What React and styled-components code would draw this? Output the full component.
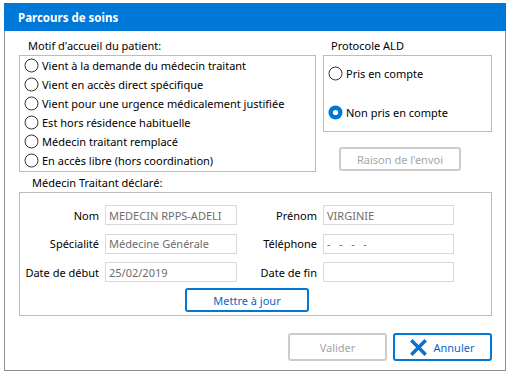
import React from "react";
import styled, { createGlobalStyle } from "styled-components";

const Global = createGlobalStyle`
  html, body { margin: 0; padding: 0; background: #ffffff; }
  body { font-family: "Noto Sans", "DejaVu Sans", sans-serif; font-size: 11px; color: #000; }
  * { box-sizing: border-box; }
`;

const Window = styled.div`
  margin: 3px 0 0 4px;
  width: 502px;
  height: 368px;
  border: 1px solid #8e8e8e;
  border-top: none;
  background: #fff;
  display: flex;
  flex-direction: column;
`;

const TitleBar = styled.div`
  height: 28px;
  margin: 0 -1px;
  background: #0078d7;
  color: #fff;
  font-weight: bold;
  font-size: 11.5px;
  display: flex;
  align-items: center;
  padding-left: 14px;
`;

const Content = styled.div`
  padding: 8px 13px 0 14px;
  display: flex;
  flex-direction: column;
`;

const TopRow = styled.div`
  display: flex;
  gap: 7px;
`;

const Group = styled.div`
  display: flex;
  flex-direction: column;
  width: ${(p) => p.$w}px;
`;

const GroupLabel = styled.div`
  height: 16px;
  line-height: 14px;
  padding-left: ${(p) => p.$indent}px;
`;

const Box = styled.div`
  border: 1px solid #bcbcbc;
  height: ${(p) => p.$h}px;
  display: flex;
  flex-direction: column;
  padding: ${(p) => p.$pad || "0"};
  gap: ${(p) => p.$gap || 0}px;
`;

const RadioRow = styled.label`
  display: flex;
  align-items: center;
  flex: none;
  height: ${(p) => p.$h || 19}px;
  gap: 3px;
  padding-left: 4px;
  white-space: nowrap;
`;

const Radio = ({ checked }) => (
  <svg width="15" height="15" viewBox="0 0 15 15">
    {checked ? (
      <>
        <circle cx="7.5" cy="7.5" r="7" fill="#0078d7" />
        <circle cx="7.5" cy="7.5" r="2.6" fill="#fff" />
      </>
    ) : (
      <circle cx="7.5" cy="7.5" r="6.5" fill="#fff" stroke="#333" strokeWidth="1" />
    )}
  </svg>
);

const Button = styled.div`
  width: ${(p) => p.$w}px;
  height: ${(p) => p.$h}px;
  margin: ${(p) => p.$m || "0"};
  border: ${(p) => (p.$primary ? "2px solid #0078d7" : "2px solid #cccccc")};
  border-radius: 3px;
  color: ${(p) => (p.$primary ? "#0a64c8" : "#a6a6a6")};
  display: flex;
  align-items: center;
  justify-content: center;
  gap: 6px;
  background: #fff;
  flex: none;
`;

const FieldGrid = styled.div`
  display: grid;
  grid-template-columns: 74px 132px 74px 131px;
  grid-auto-rows: 20px;
  column-gap: 6px;
  row-gap: 8.5px;
  padding-left: 5px;
`;

const FieldLabel = styled.div`
  text-align: right;
  align-self: center;
  white-space: nowrap;
`;

const Input = styled.div`
  border: 1px solid #d9d9d9;
  color: #6d6d6d;
  padding-left: 3px;
  display: flex;
  align-items: center;
  white-space: pre;
  overflow: hidden;
`;

const Footer = styled.div`
  display: flex;
  justify-content: flex-end;
  gap: 6px;
  margin-top: 17px;
`;

const motifs = [
  "Vient à la demande du médecin traitant",
  "Vient en accès direct spécifique",
  "Vient pour une urgence médicalement justifiée",
  "Est hors résidence habituelle",
  "Médecin traitant remplacé",
  "En accès libre (hors coordination)",
];

const fields = [
  ["Nom", "MEDECIN RPPS-ADELI", "Prénom", "VIRGINIE"],
  ["Spécialité", "Médecine Générale", "Téléphone", "-   -   -   -"],
  ["Date de début", "25/02/2019", "Date de fin", ""],
];

const XIcon = () => (
  <svg width="17" height="17" viewBox="0 0 17 17">
    <path d="M2.5 2.5 L14.5 14.5 M14.5 2.5 L2.5 14.5" stroke="#0a6fd0" strokeWidth="3.4" strokeLinecap="square" />
  </svg>
);

export default function App() {
  return (
    <>
      <Global />
      <Window>
        <TitleBar>Parcours de soins</TitleBar>
        <Content>
          <TopRow>
            <Group $w={297}>
              <GroupLabel $indent={9}>Motif d'accueil du patient:</GroupLabel>
              <Box $h={117}>
                {motifs.map((m) => (
                  <RadioRow key={m}>
                    <Radio />
                    {m}
                  </RadioRow>
                ))}
              </Box>
            </Group>
            <Group $w={169}>
              <GroupLabel $indent={8}>Protocole ALD</GroupLabel>
              <Box $h={77} $pad="7px 0 0 0" $gap={19}>
                <RadioRow $h={20}>
                  <Radio />
                  Pris en compte
                </RadioRow>
                <RadioRow $h={20}>
                  <Radio checked />
                  Non pris en compte
                </RadioRow>
              </Box>
              <Button $w={122} $h={24} $m="15px 0 0 16px">
                Raison de l'envoi
              </Button>
            </Group>
          </TopRow>
          <Group $w={473} style={{ marginTop: 4 }}>
            <GroupLabel $indent={13}>Médecin Traitant déclaré:</GroupLabel>
            <Box $h={124} $pad="12px 0 0 0">
              <FieldGrid>
                {fields.map(([l1, v1, l2, v2]) => (
                  <React.Fragment key={l1}>
                    <FieldLabel>{l1}</FieldLabel>
                    <Input>{v1}</Input>
                    <FieldLabel>{l2}</FieldLabel>
                    <Input>{v2}</Input>
                  </React.Fragment>
                ))}
              </FieldGrid>
              <Button $primary $w={124} $h={24} $m="6px 0 0 165px">
                Mettre à jour
              </Button>
            </Box>
          </Group>
          <Footer>
            <Button $w={99} $h={28}>Valider</Button>
            <Button $primary $w={99} $h={28}>
              <XIcon />
              Annuler
            </Button>
          </Footer>
        </Content>
      </Window>
    </>
  );
}
